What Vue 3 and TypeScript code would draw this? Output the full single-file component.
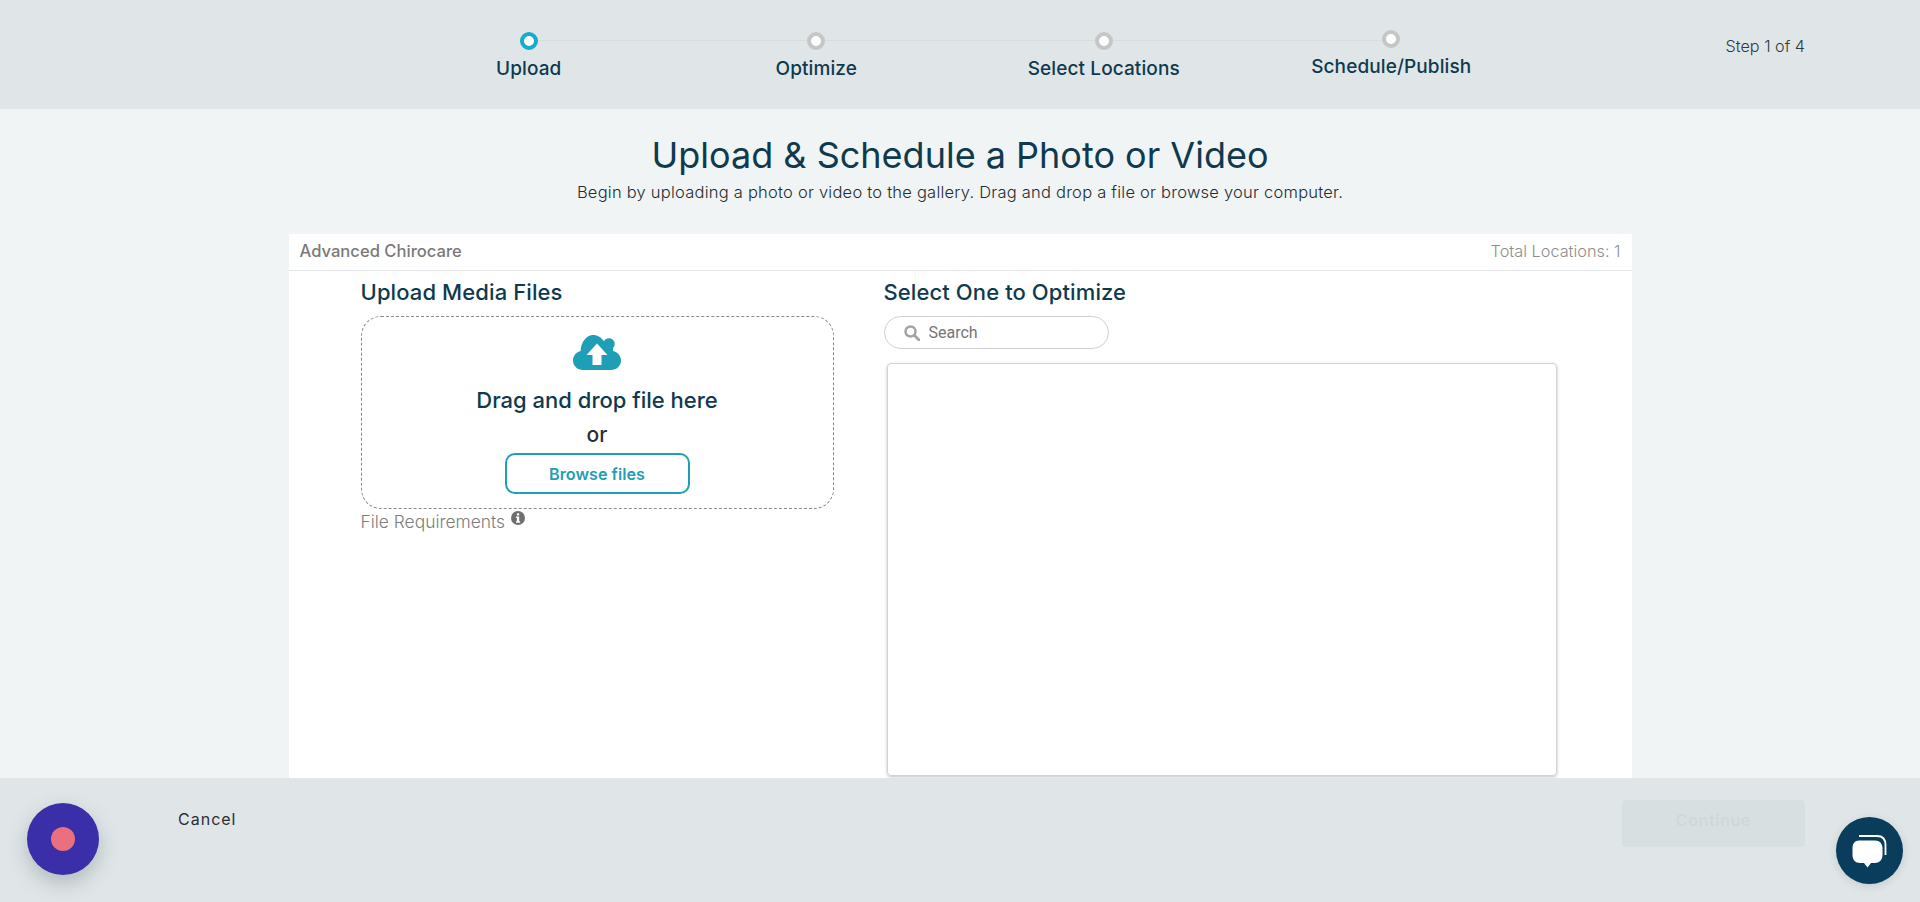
<script setup lang="ts">
interface Step {
  label: string;
  active: boolean;
}

const steps: Step[] = [
  { label: 'Upload', active: true },
  { label: 'Optimize', active: false },
  { label: 'Select Locations', active: false },
  { label: 'Schedule/Publish', active: false },
];
</script>

<template>
  <div class="wizard">
    <header class="wizard__head">
      <div></div>
      <ol class="stepper">
        <li
          v-for="(step, index) in steps"
          :key="step.label"
          class="step"
          :class="{ 'step--active': step.active, 'step--last': index === steps.length - 1 }"
        >
          <span class="step__dot"></span>
          <span class="step__label">{{ step.label }}</span>
        </li>
      </ol>
      <p class="wizard__count">Step 1 of 4</p>
    </header>

    <main class="wizard__body">
      <h1>Upload &amp; Schedule a Photo or Video</h1>
      <p class="wizard__intro">Begin by uploading a photo or video to the gallery. Drag and drop a file or browse your computer.</p>

      <section class="card">
        <div class="card__head">
          <span class="card__name">Advanced Chirocare</span>
          <span class="card__total">Total Locations: 1</span>
        </div>

        <div class="card__body">
          <div class="col col--upload">
            <h2>Upload Media Files</h2>
            <div class="drop">
              <svg class="drop__icon" viewBox="0 0 48 35" aria-hidden="true">
                <path
                  fill="#1f9fb5"
                  d="M10 35C4.400 35 0 30.800 0 25.500 0 20.800 3.200 17 7.600 16 8 7.200 13.500 0 20 0c4.500 0 8.500 2.400 10.800 6.200C32 4.300 33.800 3.200 36 3.200c3.200 0 5.700 2.500 5.700 5.700 0 1.500-.6 2.900-1.500 3.900-.2 1-.2 2.200-.2 3.200 4.700.9 8 4.800 8 9.500C48 30.800 43.600 35 38 35Z"
                />
                <path fill="#fff" d="M24 8.500 34.500 20H28.500V30H19.500V20H13.500Z" />
              </svg>
              <p class="drop__title">Drag and drop file here</p>
              <p class="drop__or">or</p>
              <button class="drop__browse" type="button">Browse files</button>
            </div>
            <p class="requirements">
              File Requirements
              <svg class="requirements__icon" viewBox="0 0 14 14" aria-hidden="true">
                <circle cx="7" cy="7" r="7" fill="#6f6f6f" />
                <rect x="5.900" y="2.300" width="2.300" height="2.200" fill="#fff" />
                <path fill="#fff" d="M5 5.600H8.200V10.300H9.200V11.700H5V10.300H5.900V7H5Z" />
              </svg>
            </p>
          </div>

          <div class="col col--select">
            <h2>Select One to Optimize</h2>
            <label class="search">
              <svg class="search__icon" viewBox="0 0 16 16" aria-hidden="true">
                <circle cx="6.500" cy="6.500" r="5" fill="none" stroke="#a3a3a3" stroke-width="2.500" />
                <path d="M10.300 10.300 15 15" stroke="#a3a3a3" stroke-width="2.800" stroke-linecap="round" />
              </svg>
              <input type="text" placeholder="Search" />
            </label>
            <div class="gallery"></div>
          </div>
        </div>
      </section>
    </main>

    <footer class="wizard__foot">
      <button class="cancel" type="button">Cancel</button>
      <button class="continue" type="button" disabled>Continue</button>
    </footer>

    <div class="record"><span class="record__dot"></span></div>
    <div class="chat">
      <svg viewBox="0 0 36 36" aria-hidden="true">
        <path fill="none" stroke="#fff" stroke-width="1.800" d="M7 3H25C30.500 3 33.500 6 33.500 12V22" />
        <path
          fill="#fff"
          d="M7 7.500H23C27.500 7.500 30.500 10.500 30.500 15V22C30.500 27 27 30 23 30H19L15.500 34.500 12 30H8C3.500 30 .5 27 .5 22V15C.5 10.500 3 7.500 7 7.500Z"
        />
      </svg>
    </div>
  </div>
</template>

<style>
html,
body {
  margin: 0;
  overflow: hidden;
  background: #fff;
}
</style>

<style scoped>
.wizard {
  position: relative;
  height: 902px;
  overflow: hidden;
  display: flex;
  flex-direction: column;
  font-family: Inter, "Liberation Sans", sans-serif;
  color: #0f3a4e;
}

.wizard__head {
  flex: 0 0 109px;
  box-sizing: border-box;
  display: grid;
  grid-template-columns: 1fr 1150px 1fr;
  background: #e0e6e8;
}

.stepper {
  display: grid;
  grid-template-columns: repeat(4, 1fr);
  margin: 0;
  padding: 32px 0 0;
  list-style: none;
}

.step {
  position: relative;
  display: flex;
  flex-direction: column;
  align-items: center;
}

.step::after {
  content: '';
  position: absolute;
  top: 8px;
  left: 50%;
  width: 100%;
  height: 1px;
  background: #d8dedf;
}

.step--last {
  margin-top: -2px;
}

.step--last::after {
  display: none;
}

.step__dot {
  position: relative;
  z-index: 1;
  box-sizing: border-box;
  width: 18px;
  height: 18px;
  border: 4px solid #c4c6c7;
  border-radius: 50%;
  background: #fff;
}

.step--active .step__dot {
  border-color: #13abd0;
}

.step__label {
  margin-top: 8px;
  font-size: 19px;
  line-height: 22px;
  font-weight: 500;
  letter-spacing: 0.1px;
  color: #0f3a4e;
}

.wizard__count {
  margin: 37px 115px 0 0;
  text-align: right;
  font-size: 16.200px;
  line-height: 19px;
  font-weight: 300;
  color: #2d3a40;
}

.wizard__body {
  flex: 1;
  min-height: 0;
  overflow: hidden;
  background: #f0f4f5;
  text-align: center;
}

h1 {
  margin: 26px 0 0;
  font-size: 36px;
  line-height: 40px;
  font-weight: 400;
  color: #0f3a4e;
}

.wizard__intro {
  margin: 7px 0 0;
  font-size: 16.500px;
  line-height: 20px;
  font-weight: 300;
  letter-spacing: 0.23px;
  color: #222c31;
}

.card {
  width: 1343px;
  height: 600px;
  margin: 32px auto 0;
  background: #fff;
  text-align: left;
}

.card__head {
  display: flex;
  justify-content: space-between;
  align-items: center;
  height: 34px;
  padding: 0 11px 2px;
  box-sizing: content-box;
  margin-bottom: -2px;
  border-bottom: 1px solid #e3e6e8;
}

.card__name {
  font-size: 16.600px;
  font-weight: 500;
  color: #7a7a7a;
}

.card__total {
  font-size: 16.300px;
  font-weight: 300;
  color: #8d8d8d;
}

.card__body {
  display: flex;
  padding-left: 72px;
  gap: 50px;
}

.col--upload {
  width: 473px;
}

.col--select {
  width: 673px;
}

h2 {
  margin: 11px 0 0;
  font-size: 22px;
  line-height: 24px;
  font-weight: 500;
  letter-spacing: 0.1px;
  color: #0f3a4e;
}

.drop {
  box-sizing: border-box;
  height: 193px;
  margin-top: 12px;
  padding-top: 18px;
  border: 1px dashed #8a8a8a;
  border-radius: 20px;
  display: flex;
  flex-direction: column;
  align-items: center;
}

.drop__icon {
  width: 48px;
  height: 35px;
}

.drop__title {
  margin: 18px 0 0;
  font-size: 22px;
  line-height: 24px;
  font-weight: 500;
  color: #0f3a4e;
}

.drop__or {
  margin: 11px 0 0;
  font-size: 21px;
  line-height: 24px;
  font-weight: 500;
  color: #2a2f33;
}

.drop__browse {
  box-sizing: border-box;
  width: 185px;
  height: 41px;
  margin-top: 6px;
  border: 2px solid #1f9fb5;
  border-radius: 10px;
  background: #fff;
  font-family: inherit;
  font-size: 16.200px;
  font-weight: 600;
  color: #1f9fb5;
}

.requirements {
  display: flex;
  align-items: flex-start;
  gap: 6px;
  margin: 2px 0 0;
  font-size: 17.400px;
  line-height: 21px;
  font-weight: 300;
  color: #7d7d7d;
}

.requirements__icon {
  width: 14px;
  height: 14px;
}

.search {
  box-sizing: border-box;
  display: flex;
  align-items: center;
  width: 225px;
  height: 33px;
  margin-top: 12px;
  padding-left: 19px;
  border: 1px solid #cfcfcf;
  border-radius: 17px;
}

.search__icon {
  flex: none;
  width: 16px;
  height: 16px;
}

.search input {
  width: 160px;
  margin-left: 9px;
  padding: 0;
  border: 0;
  outline: none;
  background: transparent;
  font-family: Roboto, sans-serif;
  font-size: 16px;
  color: #757575;
}

.search input::placeholder {
  color: #757575;
}

.gallery {
  box-sizing: border-box;
  width: 670px;
  height: 413px;
  margin: 14px 0 0 3px;
  border: 1px solid #d2d2d2;
  border-radius: 4px;
  box-shadow: 0 1px 3px rgba(0, 0, 0, 0.25);
}

.wizard__foot {
  flex: 0 0 124px;
  box-sizing: border-box;
  display: flex;
  justify-content: space-between;
  align-items: flex-start;
  padding: 22px 115px 0 178px;
  background: #e0e6e8;
}

.cancel {
  margin-top: 10px;
  padding: 0;
  border: 0;
  background: none;
  font-family: inherit;
  font-size: 16px;
  line-height: 19px;
  letter-spacing: 1px;
  color: #2a2f33;
}

.continue {
  width: 183px;
  height: 47px;
  padding-bottom: 8px;
  border: 0;
  border-radius: 4px;
  background: #d8dfe1;
  font-family: inherit;
  font-size: 16px;
  font-weight: 500;
  letter-spacing: 0.8px;
  color: #cfd6d8;
}

.record {
  position: absolute;
  left: 27px;
  bottom: 27px;
  width: 72px;
  height: 72px;
  display: flex;
  align-items: center;
  justify-content: center;
  border-radius: 50%;
  background: #3a2fa8;
  box-shadow: 0 8px 20px rgba(40, 50, 60, 0.25);
}

.record__dot {
  width: 24px;
  height: 24px;
  border-radius: 50%;
  background: #e9707c;
}

.chat {
  position: absolute;
  right: 17px;
  bottom: 18px;
  width: 67px;
  height: 67px;
  display: flex;
  align-items: center;
  justify-content: center;
  border-radius: 50%;
  background: #0a3d5c;
  box-shadow: 0 2px 8px rgba(40, 50, 60, 0.15);
}

.chat svg {
  width: 36px;
  height: 36px;
}
</style>
